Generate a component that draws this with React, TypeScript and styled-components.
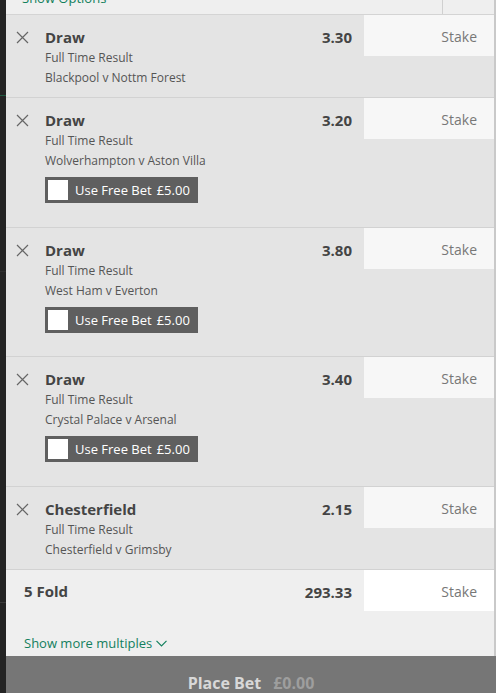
import React from "react";
import styled, { createGlobalStyle } from "styled-components";

const GlobalStyle = createGlobalStyle`
  html, body {
    margin: 0;
    padding: 0;
    background: #232323;
    font-family: "Open Sans", "Noto Sans", sans-serif;
  }
`;

type Selection = {
  name: string;
  odds: string;
  match: string;
  freeBet?: boolean;
};

const selections: Selection[] = [
  { name: "Draw", odds: "3.30", match: "Blackpool v Nottm Forest" },
  { name: "Draw", odds: "3.20", match: "Wolverhampton v Aston Villa", freeBet: true },
  { name: "Draw", odds: "3.80", match: "West Ham v Everton", freeBet: true },
  { name: "Draw", odds: "3.40", match: "Crystal Palace v Arsenal", freeBet: true },
  { name: "Chesterfield", odds: "2.15", match: "Chesterfield v Grimsby" },
];

const Screen = styled.div`
  display: flex;
  width: 496px;
  height: 693px;
  overflow: hidden;
  background: #232323;
`;

const SideStrip = styled.div`
  width: 6px;
  flex-shrink: 0;
  display: flex;
  flex-direction: column;
`;

const StripBlock = styled.div<{ $h: number; $line?: string }>`
  height: ${(p) => p.$h}px;
  border-bottom: 1px solid ${(p) => p.$line || "#2e2e2e"};
`;

const Slip = styled.div`
  flex: 1;
  display: flex;
  flex-direction: column;
  background: #efefef;
`;

const Scroll = styled.div`
  flex: 1;
  display: flex;
  flex-direction: column;
  border-right: 2px solid #c9c9c9;
`;

const Header = styled.div`
  height: 14px;
  display: flex;
  overflow: hidden;
  background: #efefef;
  border-bottom: 1px solid #d4d4d4;
`;

const HeaderLink = styled.div`
  flex: 1;
  padding-left: 16px;
  margin-top: -12px;
  font-size: 13px;
  line-height: 20px;
  color: #12805c;
`;

const HeaderCell = styled.div`
  width: 51px;
  border-left: 1px solid #d0d0d0;
`;

const BetRow = styled.div`
  display: flex;
  background: #e4e4e4;
  border-bottom: 1px solid #d2d2d2;
`;

const CloseCell = styled.div`
  width: 39px;
  flex-shrink: 0;
  display: flex;
  justify-content: flex-start;
  padding: 16px 0 0 10px;
  box-sizing: border-box;
`;

const Info = styled.div`
  flex: 1;
  padding: 12px 0 10px;
  min-width: 0;
`;

const Title = styled.div`
  font-size: 15px;
  line-height: 20px;
  font-weight: 700;
  color: #444;
`;

const SubLine = styled.div`
  font-size: 12px;
  line-height: 20px;
  color: #555;
  transform: translateY(1px);
`;

const Odds = styled.div`
  padding-top: 12px;
  padding-right: 12px;
  font-size: 15px;
  line-height: 20px;
  font-weight: 700;
  color: #444;
`;

const StakeBox = styled.div<{ $bg: string }>`
  width: 130px;
  height: 41px;
  flex-shrink: 0;
  box-sizing: border-box;
  padding: 2px 17px 0 0;
  background: ${(p) => p.$bg};
  text-align: right;
  font-size: 14px;
  line-height: 40px;
  color: #777;
`;

const FreeBet = styled.div`
  display: flex;
  width: fit-content;
  align-items: center;
  gap: 7px;
  height: 26px;
  margin: 7px 0 13.67px;
  padding: 0 8px 0 3px;
  background: #5f5f5f;
  color: #fff;
  font-size: 13px;
`;

const Check = styled.div`
  width: 20px;
  height: 20px;
  background: #fff;
`;

const Amount = styled.span`
  margin-left: 5px;
`;

const FoldSection = styled.div`
  flex: 1;
  display: flex;
  flex-direction: column;
  background: #efefef;
`;

const FoldRow = styled.div`
  display: flex;
  align-items: flex-start;
`;

const FoldName = styled.div`
  flex: 1;
  padding: 11px 0 0 18px;
  font-size: 15px;
  line-height: 20px;
  font-weight: 700;
  color: #444;
`;

const MoreLink = styled.div`
  margin-top: auto;
  padding: 0 0 3px 18px;
  display: flex;
  align-items: center;
  gap: 4px;
  font-size: 13px;
  line-height: 20px;
  color: #13805e;
`;

const PlaceBar = styled.div`
  height: 37px;
  flex-shrink: 0;
  box-sizing: border-box;
  display: flex;
  justify-content: center;
  align-items: flex-start;
  gap: 12px;
  padding-top: 17px;
  background: #767676;
  font-size: 16px;
  font-weight: 700;
  line-height: 20px;
`;

const PlaceLabel = styled.span`
  color: #d8d8d8;
`;

const PlaceAmount = styled.span`
  color: #9e9e9e;
`;

const CloseIcon = () => (
  <svg width="13" height="13" viewBox="0 0 13 13">
    <path d="M1 1 L12 12 M12 1 L1 12" stroke="#666" strokeWidth="1.2" fill="none" />
  </svg>
);

const Chevron = () => (
  <svg width="11" height="7" viewBox="0 0 11 7">
    <path d="M0.5 0.8 L5.5 5.8 L10.5 0.8" stroke="#13805e" strokeWidth="1.2" fill="none" />
  </svg>
);

const BetCard = ({ sel }: { sel: Selection }) => (
  <BetRow>
    <CloseCell>
      <CloseIcon />
    </CloseCell>
    <Info>
      <Title>{sel.name}</Title>
      <SubLine>Full Time Result</SubLine>
      <SubLine>{sel.match}</SubLine>
      {sel.freeBet && (
        <FreeBet>
          <Check />
          <span>
            Use Free Bet<Amount>£5.00</Amount>
          </span>
        </FreeBet>
      )}
    </Info>
    <Odds>{sel.odds}</Odds>
    <StakeBox $bg="#f7f7f7">Stake</StakeBox>
  </BetRow>
);

const App = () => {
  return (
    <Screen>
      <GlobalStyle />
      <SideStrip>
        <StripBlock $h={95} $line="#1f5a40" />
        <StripBlock $h={175} />
        <StripBlock $h={330} $line="#3a3a3a" />
      </SideStrip>
      <Slip>
        <Scroll>
          <Header>
            <HeaderLink>Show Options</HeaderLink>
            <HeaderCell />
          </Header>
          {selections.map((s, i) => (
            <BetCard key={i} sel={s} />
          ))}
          <FoldSection>
            <FoldRow>
              <FoldName>5 Fold</FoldName>
              <Odds>293.33</Odds>
              <StakeBox $bg="#ffffff">Stake</StakeBox>
            </FoldRow>
            <MoreLink>
              Show more multiples <Chevron />
            </MoreLink>
          </FoldSection>
        </Scroll>
        <PlaceBar>
          <PlaceLabel>Place Bet</PlaceLabel>
          <PlaceAmount>£0.00</PlaceAmount>
        </PlaceBar>
      </Slip>
    </Screen>
  );
};

export default App;
